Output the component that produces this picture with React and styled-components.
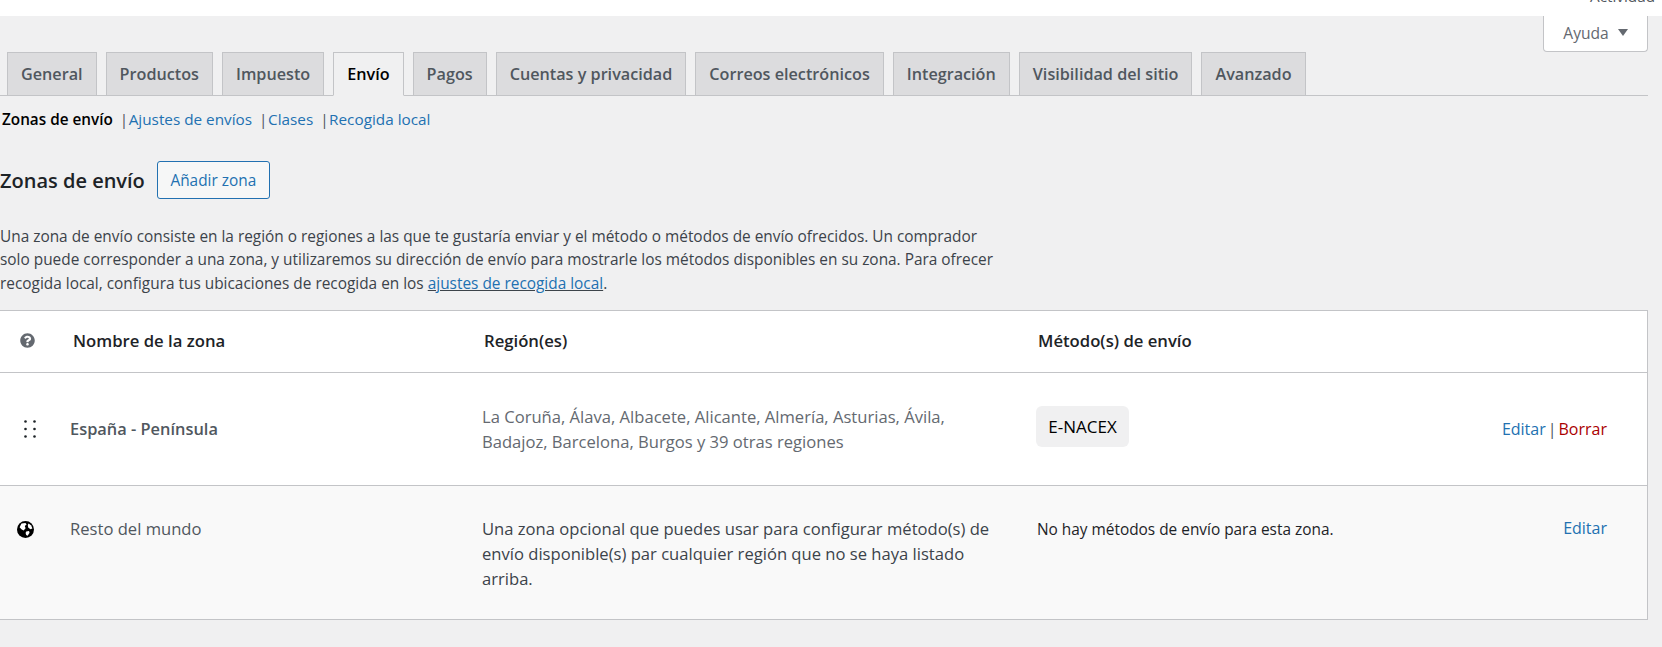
import React from "react";
import styled, { createGlobalStyle } from "styled-components";
import { FaQuestionCircle } from "react-icons/fa";

const GlobalStyle = createGlobalStyle`
	html, body { margin: 0; padding: 0; background: #f0f0f1; }
	body {
		font-family: "Open Sans", "Noto Sans", sans-serif;
		font-size: 14px;
		color: #3c434a;
		overflow: hidden;
	}
	a { color: #2271b1; text-decoration: none; }
`;

const tabs = ["General", "Productos", "Impuesto", "Envío", "Pagos", "Cuentas y privacidad", "Correos electrónicos", "Integración", "Visibilidad del sitio", "Avanzado"];
const subnav = ["Ajustes de envíos", "Clases", "Recogida local"];

const App = () => (
	<Page>
		<GlobalStyle />
		<TopBar><span>Actividad</span></TopBar>
		<HelpRow>
			<HelpTab>Ayuda <Caret /></HelpTab>
		</HelpRow>
		<TabBar>
			{tabs.map((t) => <Tab key={t} $active={t === "Envío"}>{t}</Tab>)}
		</TabBar>
		<SubNav>
			<strong>Zonas de envío</strong>
			{subnav.map((s) => <SubItem key={s}><Sep>|</Sep><a href="#">{s}</a></SubItem>)}
		</SubNav>
		<TitleRow>
			<Title>Zonas de envío</Title>
			<AddButton>Añadir zona</AddButton>
		</TitleRow>
		<Intro>
			Una zona de envío consiste en la región o regiones a las que te gustaría enviar y el método o métodos de envío ofrecidos. Un comprador solo puede corresponder a una zona, y utilizaremos su dirección de envío para mostrarle los métodos disponibles en su zona. Para ofrecer recogida local, configura tus ubicaciones de recogida en los <u><a href="#">ajustes de recogida local</a></u>.
		</Intro>
		<Table>
			<colgroup>
				<col style={{ width: 66 }} />
				<col style={{ width: 411 }} />
				<col style={{ width: 554 }} />
				<col />
				<col style={{ width: 220 }} />
			</colgroup>
			<thead>
				<tr>
					<Th $icon><FaQuestionCircle size={15} color="#646970" /></Th>
					<Th>Nombre de la zona</Th>
					<Th>Región(es)</Th>
					<Th>Método(s) de envío</Th>
					<Th />
				</tr>
			</thead>
			<tbody>
				<Row>
					<IconCell $drag><DragDots /></IconCell>
					<NameCell><b>España - Península</b></NameCell>
					<RegionCell>La Coruña, Álava, Albacete, Alicante, Almería, Asturias, Ávila, Badajoz, Barcelona, Burgos y 39 otras regiones</RegionCell>
					<MethodCell><Method>E-NACEX</Method></MethodCell>
					<ActionCell><a href="#">Editar</a><Bar>|</Bar><Delete href="#">Borrar</Delete></ActionCell>
				</Row>
				<Row $alt>
					<IconCell $globe $top><Globe /></IconCell>
					<NameCell $top>Resto del mundo</NameCell>
					<RegionDark $top>Una zona opcional que puedes usar para configurar método(s) de envío disponible(s) par cualquier región que no se haya listado arriba.</RegionDark>
					<MethodCell $top><Empty>No hay métodos de envío para esta zona.</Empty></MethodCell>
					<ActionCell $top><a href="#">Editar</a></ActionCell>
				</Row>
			</tbody>
		</Table>
	</Page>
);

const DragDots = () => (
	<svg width="12" height="18" viewBox="0 0 12 18" fill="#1d2327">
		{[1.5, 9, 16.5].map((y) => [1.5, 10.5].map((x) => <circle key={`${x}-${y}`} cx={x} cy={y} r="1.3" />))}
	</svg>
);

const Globe = () => (
	<svg width="17" height="17" viewBox="0 0 17 17">
		<circle cx="8.5" cy="8.5" r="8.5" fill="#000" />
		<path fill="#fff" d="M4.5 2.6 8.4 2 9.6 3.6 7.8 5 8.6 7.2 6.6 9.4 4.4 8.2 2.6 6.2Z" />
		<path fill="#fff" d="M11.6 2.4 14.2 4.4 15.4 7.6 13.4 8.2 11.2 6.4 10.8 4Z" />
		<path fill="#fff" d="M9.2 10.4 12 10 12.6 11.8 10.6 14.8 9.2 14 8.6 12Z" />
	</svg>
);

export default App;

const Page = styled.div`
	width: 1662px;
	height: 647px;
	overflow: hidden;
`;

const TopBar = styled.div`
	height: 16px;
	background: #fff;
	overflow: hidden;
	display: flex;
	justify-content: flex-end;
	padding-right: 7px;
	span {
		margin-top: -14px;
		height: 20px;
		line-height: 20px;
		font-size: 15.3px;
		color: #50575e;
	}
`;

const HelpRow = styled.div`
	height: 36px;
	display: flex;
	justify-content: flex-end;
	padding-right: 14px;
`;

const HelpTab = styled.div`
	width: 105px;
	box-sizing: border-box;
	background: #fff;
	border: 1px solid #c3c4c7;
	border-top: 0;
	border-radius: 0 0 4px 4px;
	padding-bottom: 2px;
	display: flex;
	align-items: center;
	justify-content: center;
	gap: 9px;
	color: #646970;
	font-size: 15.6px;
`;

const Caret = styled.i`
	width: 0;
	height: 0;
	border-left: 5px solid transparent;
	border-right: 5px solid transparent;
	border-top: 7px solid #646970;
`;

const TabBar = styled.div`
	display: flex;
	gap: 9px;
	height: 44px;
	box-sizing: border-box;
	margin-right: 14px;
	padding-left: 7px;
	border-bottom: 1px solid #c3c4c7;
`;

const Tab = styled.div`
	height: 44px;
	box-sizing: border-box;
	padding: 0 13px;
	display: flex;
	align-items: center;
	font-size: 16.2px;
	font-weight: 600;
	border: 1px solid #c3c4c7;
	background: ${(p) => (p.$active ? "#f0f0f1" : "#dcdcde")};
	color: ${(p) => (p.$active ? "#000" : "#50575e")};
	border-bottom-color: ${(p) => (p.$active ? "#f0f0f1" : "#c3c4c7")};
`;

const SubNav = styled.div`
	display: flex;
	padding: 13px 0 0 2px;
	height: 23px;
	line-height: 20px;
	font-size: 15.3px;
	strong { color: #000; font-weight: 600; }
`;

const SubItem = styled.span`
	display: inline-flex;
`;

const Sep = styled.span`
	color: #50575e;
	margin: 0 0.5px 0 7px;
`;

const TitleRow = styled.div`
	display: flex;
	align-items: center;
	gap: 12px;
	margin-top: 29px;
	height: 38px;
`;

const Title = styled.h2`
	margin: 0;
	font-size: 20px;
	font-weight: 600;
	color: #1d2327;
`;

const AddButton = styled.button`
	font: inherit;
	font-size: 15.4px;
	height: 38px;
	width: 113px;
	padding: 0;
	color: #2271b1;
	background: #f6f7f7;
	border: 1px solid #2271b1;
	border-radius: 3px;
`;

const Intro = styled.p`
	margin: 26px 0 15px;
	width: 995px;
	font-size: 15.4px;
	line-height: 23.4px;
	color: #3c434a;
`;

const Table = styled.table`
	width: 1648px;
	table-layout: fixed;
	border-collapse: separate;
	border-spacing: 0;
	background: #fff;
	border: 1px solid #c3c4c7;
	border-left: 0;
`;

const Th = styled.th`
	height: 62px;
	padding: 0 0 2px ${(p) => (p.$icon ? "20px" : "7px")};
	box-sizing: border-box;
	text-align: left;
	font-size: 16.7px;
	font-weight: 600;
	color: #1d2327;
	border-bottom: 1px solid #c3c4c7;
	svg { display: block; }
`;

const Row = styled.tr`
	background: ${(p) => (p.$alt ? "#f9f9f9" : "#fff")};
	&:not(:last-child) td { border-bottom: 1px solid #c3c4c7; }
`;

const Td = styled.td`
	vertical-align: ${(p) => (p.$top ? "top" : "middle")};
	padding: ${(p) => (p.$top ? "30px" : "0")} 0 0 4px;
	font-size: 16.6px;
	line-height: ${(p) => (p.$top ? "25px" : "25.5px")};
	color: #50575e;
	box-sizing: border-box;
`;

const IconCell = styled(Td)`
	padding-left: ${(p) => (p.$drag ? "24px" : "17px")};
	padding-top: ${(p) => (p.$globe ? "35px" : "0")};
	svg { display: block; }
`;

const NameCell = styled(Td)`
	color: #50575e;
	height: ${(p) => (p.$top ? "133px" : "113px")};
	b { font-weight: 600; font-size: 16.4px; }
`;

const RegionCell = styled(Td)`
	color: #646970;
	padding-left: 5px;
	padding-right: 30px;
`;

const RegionDark = styled(RegionCell)`
	color: #3c434a;
`;

const MethodCell = styled(Td)``;

const Method = styled.span`
	display: inline-block;
	background: #f0f0f1;
	color: #000;
	border-radius: 6px;
	width: 93px;
	box-sizing: border-box;
	text-align: center;
	font-size: 17px;
	padding: 8px 0;
	margin: -5px 0 0 1px;
`;

const Empty = styled.span`
	font-size: 15.4px;
	color: #1d2327;
	margin-left: 2px;
`;

const ActionCell = styled(Td)`
	text-align: right;
	padding-right: 40px;
	padding-top: ${(p) => (p.$top ? "30px" : "2px")};
	font-size: 16px;
`;

const Bar = styled.span`
	margin: 0 2px;
	color: #50575e;
`;

const Delete = styled.a`
	&& { color: #a00; }
`;
